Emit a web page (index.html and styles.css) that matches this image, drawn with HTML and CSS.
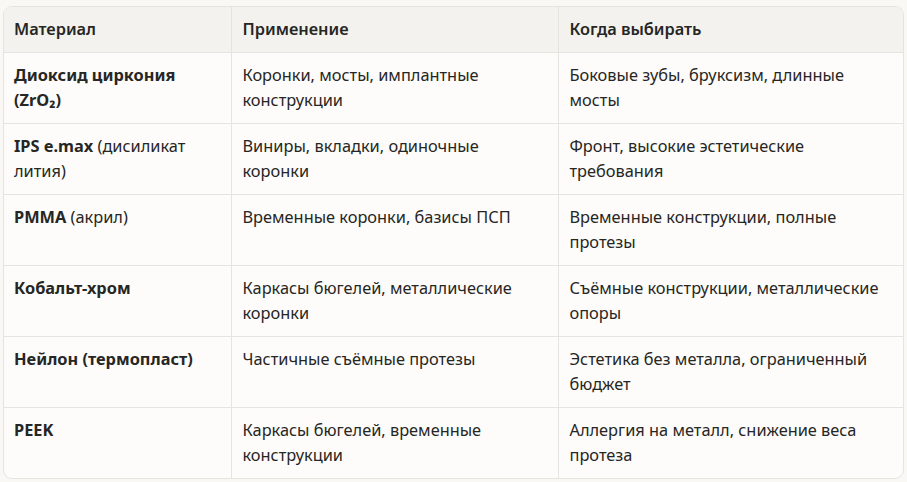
FILE: index.html
```html
<!DOCTYPE html>
<html lang="ru">
<head>
<meta charset="utf-8">
<link rel="stylesheet" href="styles.css">
</head>
<body>
<div class="wrap">
<table class="tbl">
<colgroup><col class="c1"><col class="c2"><col class="c3"></colgroup>
<thead>
<tr><th>Материал</th><th>Применение</th><th>Когда выбирать</th></tr>
</thead>
<tbody>
<tr><td><b>Диоксид циркония (ZrO₂)</b></td><td>Коронки, мосты, имплантные конструкции</td><td>Боковые зубы, бруксизм, длинные мосты</td></tr>
<tr><td><b>IPS e.max</b> (дисиликат лития)</td><td>Виниры, вкладки, одиночные коронки</td><td>Фронт, высокие эстетические требования</td></tr>
<tr><td><b>PMMA</b> (акрил)</td><td>Временные коронки, базисы ПСП</td><td>Временные конструкции, полные протезы</td></tr>
<tr><td><b>Кобальт-хром</b></td><td>Каркасы бюгелей, металлические коронки</td><td>Съёмные конструкции, металлические опоры</td></tr>
<tr><td><b>Нейлон (термопласт)</b></td><td>Частичные съёмные протезы</td><td>Эстетика без металла, ограниченный бюджет</td></tr>
<tr><td><b>PEEK</b></td><td>Каркасы бюгелей, временные конструкции</td><td>Аллергия на металл, снижение веса протеза</td></tr>
</tbody>
</table>
</div>
</body>
</html>
```

FILE: styles.css
```css
html, body {
  margin: 0;
  padding: 0;
  background: #f9f8f5;
}
body {
  padding: 6px 0 0 3px;
  font-family: "Noto Sans", "Open Sans", sans-serif;
  color: #262624;
}
.wrap {
  width: 901px;
  box-sizing: border-box;
  border: 1px solid #e6e4df;
  border-radius: 9px;
  overflow: hidden;
  background: #fdfcfa;
}
.tbl {
  width: 100%;
  border-collapse: collapse;
  table-layout: fixed;
  font-size: 16.35px;
  line-height: 25px;
}
.c1 { width: 227px; }
.c2 { width: 327px; }
.c3 { width: auto; }
.tbl th, .tbl td {
  text-align: left;
  vertical-align: top;
  padding: 10px 12px 10px 10px;
  border-right: 1px solid #e6e4df;
  border-bottom: 1px solid #e6e4df;
}
.tbl th:last-child, .tbl td:last-child { border-right: none; }
.tbl tbody tr:last-child td { border-bottom: none; }
.tbl th:nth-child(n+2), .tbl td:nth-child(n+2) { padding-left: 11px; }
.tbl th {
  background: #f3f2ee;
  font-weight: 600;
}
.tbl b { font-weight: 700; }
```
